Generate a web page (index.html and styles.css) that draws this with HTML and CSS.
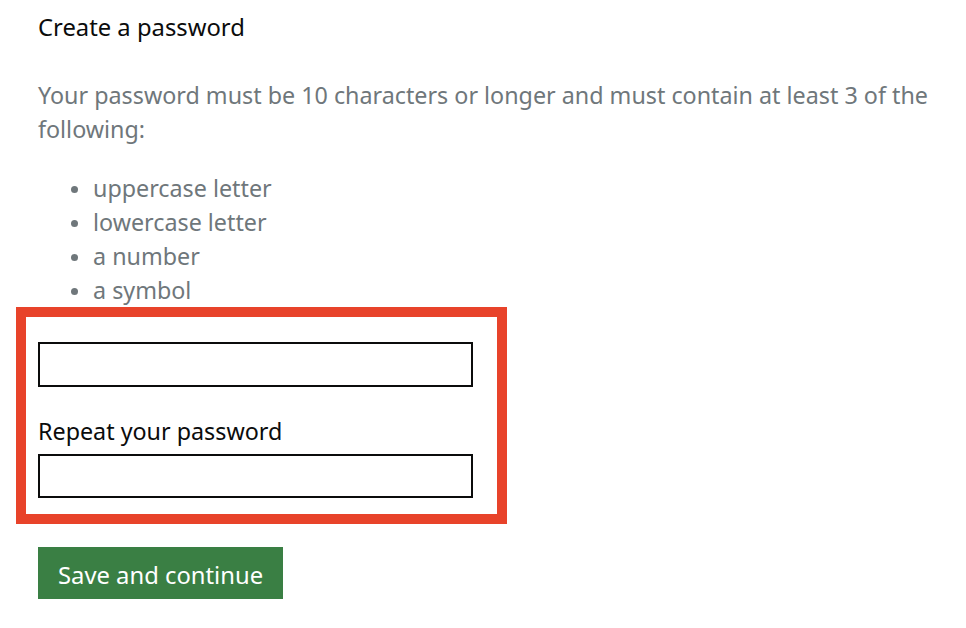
FILE: index.html
```html
<!DOCTYPE html>
<html lang="en">
<head>
<meta charset="utf-8">
<title>Create a password</title>
<link rel="stylesheet" href="styles.css">
</head>
<body>
<main class="page">
  <h1 class="title">Create a password</h1>
  <p class="hint">Your password must be 10 characters or longer and must contain at least 3 of the following:</p>
  <ul class="rules">
    <li>uppercase letter</li>
    <li>lowercase letter</li>
    <li>a number</li>
    <li>a symbol</li>
  </ul>
  <div class="highlight">
    <input class="field first" type="password" aria-label="Password">
    <label class="label" for="repeat">Repeat your password</label>
    <input class="field" id="repeat" type="password">
  </div>
  <button class="button" type="button">Save and continue</button>
</main>
</body>
</html>
```

FILE: styles.css
```css
html, body {
  margin: 0;
  padding: 0;
  background: #ffffff;
}

.page {
  padding: 10px 0 0 38px;
  font-family: "Noto Sans", "Open Sans", sans-serif;
  font-size: 23.3px;
  line-height: 34px;
  color: #0b0c0c;
}

.title {
  margin: 0;
  font-size: 23.8px;
  font-weight: 400;
  line-height: 34px;
}

.hint {
  margin: 34px 0 0;
  width: 900px;
  color: #6f777b;
}

.rules {
  margin: 25px 0 0;
  padding: 0 0 0 33px;
  list-style: none;
  color: #6f777b;
}

.rules li {
  display: flex;
  align-items: center;
  height: 34px;
}

.rules li::before {
  content: "";
  width: 7px;
  height: 7px;
  margin: 2px 15px 0 0;
  border-radius: 50%;
  background: #6f777b;
  flex: none;
}

.highlight {
  margin-left: -22px;
  width: 447px;
  border: 10px solid #e8432a;
  padding: 15px 12px 16px 12px;
  display: flex;
  flex-direction: column;
  align-items: flex-start;
}

.field {
  box-sizing: border-box;
  width: 435px;
  height: 45px;
  margin: 10px 0 0;
  border: 2px solid #0b0c0c;
  border-radius: 0;
  background: #ffffff;
  padding: 4px;
  font: inherit;
}

.label {
  margin-top: 27px;
  display: block;
  line-height: 34px;
}

.label + .field {
  margin-top: 6px;
  height: 44px;
}

.button {
  margin-top: 23px;
  display: block;
  height: 52px;
  padding: 3px 20px 0;
  border: 0;
  border-radius: 0;
  background: #3a7f44;
  box-shadow: 0 3px 0 #1e3d22;
  color: #ffffff;
  font-family: "Noto Sans", "Open Sans", sans-serif;
  font-size: 23.8px;
  line-height: 34px;
  cursor: pointer;
}
```
